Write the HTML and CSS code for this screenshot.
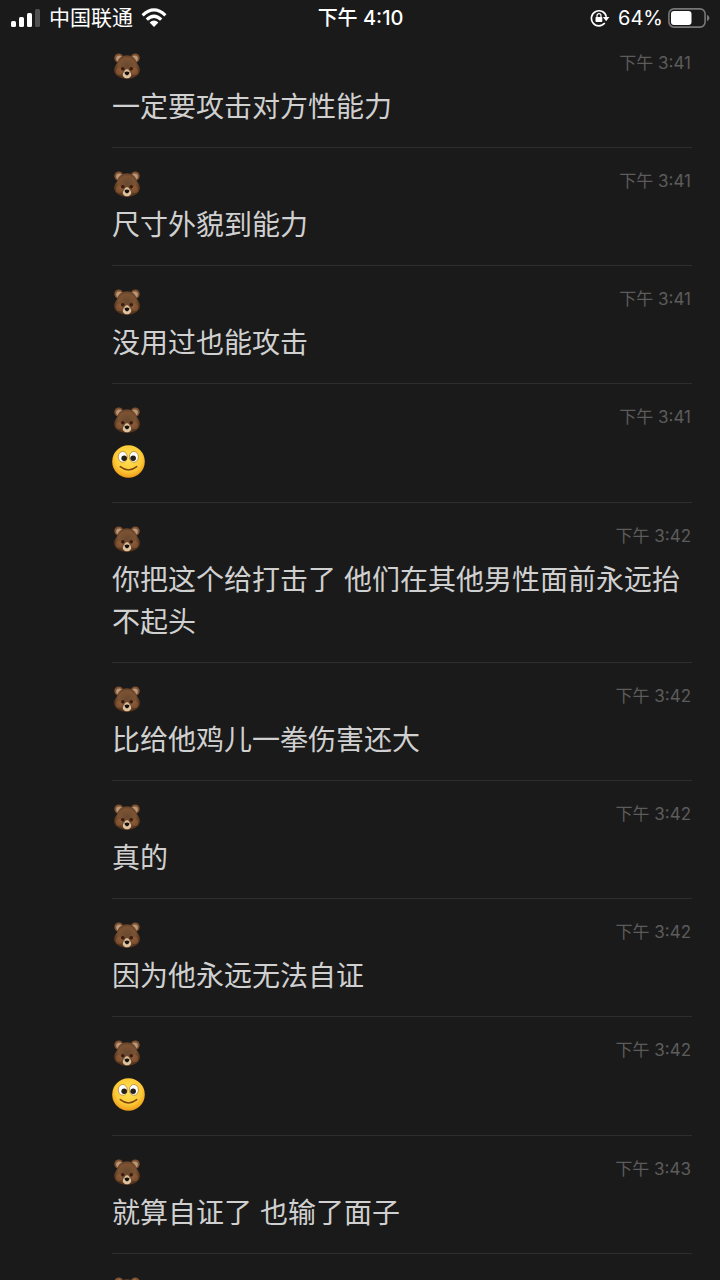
FILE: index.html
```html
<!DOCTYPE html>
<html lang="zh-CN">
<head>
<meta charset="utf-8">
<meta name="viewport" content="width=device-width, initial-scale=1">
<title>聊天记录</title>
<link rel="stylesheet" href="styles.css">
</head>
<body>
<svg class="defs" aria-hidden="true">
  <defs>
    <radialGradient id="fur" cx=".5" cy=".45" r=".58">
      <stop offset="0" stop-color="#68492f"/><stop offset=".55" stop-color="#7c5333"/><stop offset="1" stop-color="#4a2a16"/>
    </radialGradient>
    <radialGradient id="skin" cx=".5" cy=".4" r=".62">
      <stop offset="0" stop-color="#ffe356"/><stop offset=".65" stop-color="#fdca38"/><stop offset="1" stop-color="#ed9614"/>
    </radialGradient>
    <symbol id="bear" viewBox="0 0 30 28">
      <circle cx="6.800" cy="6" r="4.500" fill="#80522f"/><circle cx="23.200" cy="6" r="4.500" fill="#80522f"/>
      <circle cx="7.200" cy="6.600" r="3" fill="#b8977b"/><circle cx="22.800" cy="6.600" r="3" fill="#b8977b"/>
      <path d="M15 3.200C9.500 3.200 6.300 6.500 5.300 10.500C4.300 12.800 2 15 2 18.300C2 23.500 8.500 27 15 27S28 23.500 28 18.300C28 15 25.700 12.800 24.700 10.500C23.700 6.500 20.500 3.200 15 3.200Z" fill="url(#fur)"/>
      <ellipse cx="7" cy="19.500" rx="3.200" ry="3.500" fill="#94603b" opacity=".55"/><ellipse cx="23" cy="19.500" rx="3.200" ry="3.500" fill="#94603b" opacity=".55"/>
      <ellipse cx="10.800" cy="16.800" rx="1.800" ry="1.800" fill="#3c1b0e"/><ellipse cx="19.200" cy="16.800" rx="1.800" ry="1.800" fill="#3c1b0e"/>
      <path d="M15 17.200C13 17.200 12.800 19.200 11.600 20.500C9.800 23 11.200 26.300 15 26.300S20.200 23 18.400 20.500C17.200 19.200 17 17.200 15 17.200Z" fill="#dcc29e"/>
      <path d="M12.500 20.400Q15 18.700 17.500 20.400Q17.500 22.600 15 23.400Q12.500 22.600 12.500 20.400Z" fill="#171010"/>
    </symbol>
    <symbol id="smile" viewBox="0 0 32 32">
      <circle cx="16" cy="16" r="15.800" fill="url(#skin)"/>
      <ellipse cx="10.400" cy="11.500" rx="4.400" ry="5.200" fill="#fff" stroke="#a9792b" stroke-width=".7"/>
      <ellipse cx="21.200" cy="11.500" rx="4.400" ry="5.200" fill="#fff" stroke="#a9792b" stroke-width=".7"/>
      <circle cx="11.800" cy="12.800" r="2.700" fill="#281f19"/><circle cx="20.500" cy="12.800" r="2.700" fill="#281f19"/>
      <path d="M8 21Q16 27.400 24 21" fill="none" stroke="#7a4712" stroke-width="1.500" stroke-linecap="round"/>
    </symbol>
  </defs>
</svg>

<header class="status">
  <div class="status-left">
    <svg class="signal" viewBox="0 0 30 20" role="img" aria-label="信号">
      <rect x="0" y="13" width="5" height="6" rx="1.500" fill="#fff"/><rect x="8" y="9" width="5" height="10" rx="1.500" fill="#fff"/>
      <rect x="16" y="5" width="5" height="14" rx="1.500" fill="#fff"/><rect x="24" y="1" width="5" height="18" rx="1.500" fill="#505050"/>
    </svg>
    <span class="carrier">中国联通</span>
    <svg class="wifi" viewBox="0 0 26 20" role="img" aria-label="无线网络">
      <path d="M1.600 7.300Q13-3.600 24.400 7.300M5.800 11.700Q13 4.700 20.200 11.700" fill="none" stroke="#fff" stroke-width="3.200"/>
      <path d="M8.600 14.500Q13 10.500 17.400 14.500L13 19Z" fill="#fff"/>
    </svg>
  </div>
  <time class="clock">下午 4:10</time>
  <div class="status-right">
    <svg class="lock" viewBox="0 0 20 18" role="img" aria-label="方向锁定">
      <path d="M14.800 14A7.500 7.500 0 1 1 16.300 7.800" fill="none" stroke="#fff" stroke-width="1.700"/>
      <path d="M12.800 8H19.400L16.200 12.300Z" fill="#fff"/>
      <rect x="5.500" y="8" width="6.800" height="5" rx=".7" fill="#fff"/>
      <path d="M7 8.500V6.700a2 2 0 0 1 4 0V8.500" fill="none" stroke="#fff" stroke-width="1.200"/>
    </svg>
    <span class="percent">64%</span>
    <svg class="battery" viewBox="0 0 42 20" role="img" aria-label="电量">
      <rect x=".9" y=".9" width="36.200" height="18.200" rx="5" fill="none" stroke="#777" stroke-width="1.600"/>
      <rect x="3" y="3" width="20.500" height="14" rx="3" fill="#fff"/>
      <path d="M39 6.800Q41.500 8 41.500 10T39 13.200Z" fill="#777"/>
    </svg>
  </div>
</header>

<main class="messages">
  <article class="message">
    <div class="meta"><svg class="bear" role="img" aria-label="熊"><use href="#bear"/></svg><time>下午 3:41</time></div>
    <p class="text">一定要攻击对方性能力</p>
  </article>
  <article class="message">
    <div class="meta"><svg class="bear" role="img" aria-label="熊"><use href="#bear"/></svg><time>下午 3:41</time></div>
    <p class="text">尺寸外貌到能力</p>
  </article>
  <article class="message">
    <div class="meta"><svg class="bear" role="img" aria-label="熊"><use href="#bear"/></svg><time>下午 3:41</time></div>
    <p class="text">没用过也能攻击</p>
  </article>
  <article class="message">
    <div class="meta"><svg class="bear" role="img" aria-label="熊"><use href="#bear"/></svg><time>下午 3:41</time></div>
    <p class="text emoji"><svg class="smile" role="img" aria-label="微笑"><use href="#smile"/></svg></p>
  </article>
  <article class="message">
    <div class="meta"><svg class="bear" role="img" aria-label="熊"><use href="#bear"/></svg><time>下午 3:42</time></div>
    <p class="text">你把这个给打击了 他们在其他男性面前永远抬不起头</p>
  </article>
  <article class="message">
    <div class="meta"><svg class="bear" role="img" aria-label="熊"><use href="#bear"/></svg><time>下午 3:42</time></div>
    <p class="text">比给他鸡儿一拳伤害还大</p>
  </article>
  <article class="message">
    <div class="meta"><svg class="bear" role="img" aria-label="熊"><use href="#bear"/></svg><time>下午 3:42</time></div>
    <p class="text">真的</p>
  </article>
  <article class="message">
    <div class="meta"><svg class="bear" role="img" aria-label="熊"><use href="#bear"/></svg><time>下午 3:42</time></div>
    <p class="text">因为他永远无法自证</p>
  </article>
  <article class="message">
    <div class="meta"><svg class="bear" role="img" aria-label="熊"><use href="#bear"/></svg><time>下午 3:42</time></div>
    <p class="text emoji"><svg class="smile" role="img" aria-label="微笑"><use href="#smile"/></svg></p>
  </article>
  <article class="message">
    <div class="meta"><svg class="bear" role="img" aria-label="熊"><use href="#bear"/></svg><time>下午 3:43</time></div>
    <p class="text">就算自证了 也输了面子</p>
  </article>
  <article class="message">
    <div class="meta"><svg class="bear" role="img" aria-label="熊"><use href="#bear"/></svg></div>
  </article>
</main>
</body>
</html>
```

FILE: styles.css
```css
* {
  box-sizing: border-box;
}

body {
  display: flex;
  flex-direction: column;
  height: 100vh;
  margin: 0;
  overflow: hidden;
  background: #1a1a1a;
  color: #d0d0d0;
  font-family: Inter, "Noto Sans CJK SC", sans-serif;
}

svg {
  display: block;
  flex: none;
}

.defs {
  position: absolute;
  width: 0;
  height: 0;
}

.status {
  display: grid;
  flex: none;
  grid-template-columns: 1fr auto 1fr;
  align-items: center;
  padding: 6px 10px 0 11px;
  color: #fff;
  font-size: 20px;
  line-height: 24px;
}

.status-left,
.status-right {
  display: flex;
  align-items: center;
}

.status-left {
  gap: 8px;
}

.status-right {
  justify-content: flex-end;
  gap: 5px;
}

.clock {
  font-weight: 500;
}

.carrier {
  font-size: 21px;
}

.signal {
  width: 30px;
  height: 20px;
}

.wifi {
  width: 26px;
  height: 20px;
}

.lock {
  width: 20px;
  height: 18px;
  margin-right: 3px;
}

.battery {
  width: 42px;
  height: 20px;
}

.messages {
  flex: 1;
  min-height: 0;
  padding: 0 28px 0 112px;
  overflow: hidden;
}

.message {
  padding: 20px 0 19px;
  border-bottom: 1px solid #2d2d2d;
}

.meta {
  display: flex;
  align-items: flex-start;
  justify-content: space-between;
  height: 36px;
  padding-right: 1px;
  color: #5c5c5c;
  font-size: 17px;
  line-height: 27px;
}

.bear {
  width: 30px;
  height: 28px;
  margin-top: 2px;
}

.text {
  margin: 0;
  font-size: 28px;
  line-height: 42px;
}

.emoji {
  display: flex;
  align-items: center;
  height: 42px;
  margin-bottom: 1px;
}

.smile {
  width: 33px;
  height: 33px;
}
```
